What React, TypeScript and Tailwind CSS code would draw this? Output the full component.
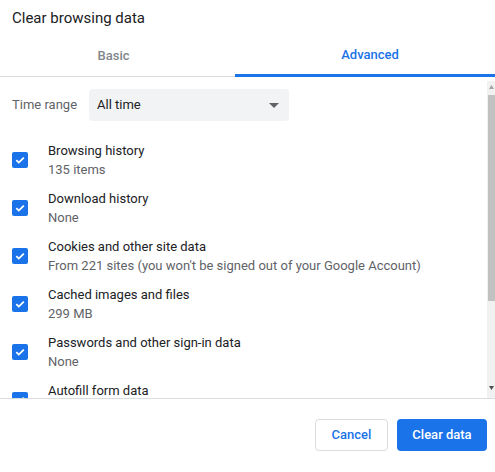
import { useState } from 'react'

const ITEMS = [
  { title: 'Browsing history', sub: '135 items' },
  { title: 'Download history', sub: 'None' },
  { title: 'Cookies and other site data', sub: "From 221 sites (you won't be signed out of your Google Account)" },
  { title: 'Cached images and files', sub: '299 MB' },
  { title: 'Passwords and other sign-in data', sub: 'None' },
  { title: 'Autofill form data', sub: 'None' },
]

function CheckBox() {
  return (
    <span className="flex h-4 w-4 shrink-0 items-center justify-center rounded-[2px] bg-[#1a73e8]">
      <svg width="12" height="12" viewBox="0 0 12 12" fill="none">
        <path d="M2.3 6.2 4.8 8.6 9.8 3.6" stroke="white" strokeWidth="1.8" />
      </svg>
    </span>
  )
}

export default function App() {
  const [tab, setTab] = useState('advanced')

  return (
    <div className="flex h-[472px] w-[495px] flex-col bg-white font-['Roboto',sans-serif] text-[13px] text-[#202124]">
      {/* Title */}
      <div className="flex h-[37px] items-center px-3 text-[15px]">Clear browsing data</div>

      {/* Tabs */}
      <div className="flex h-10 border-b border-[#dadce0]">
        <button
          type="button"
          className={`flex w-[235px] items-center justify-center pb-[2px] pr-2 font-medium ${tab === 'basic' ? '-mb-px border-b-[3px] border-[#1a73e8] text-[#1a73e8]' : 'text-[#80868b]'}`}
          onClick={() => setTab('basic')}
        >
          Basic
        </button>
        <button
          type="button"
          className={`flex flex-1 items-center justify-center pb-[2px] pl-[10px] font-medium ${tab === 'advanced' ? '-mb-px border-b-[3px] border-[#1a73e8] text-[#1a73e8]' : 'text-[#80868b]'}`}
          onClick={() => setTab('advanced')}
        >
          Advanced
        </button>
      </div>

      {/* Scrollable body */}
      <div className="flex h-[322px] border-b border-[#dadce0]">
        <div className="flex-1 overflow-hidden pt-3">
          <div className="flex items-center px-3">
            <span className="w-[77px] text-[#5f6368]">Time range</span>
            <div className="flex h-8 w-[200px] items-center justify-between rounded-[4px] bg-[#f1f3f4] pl-[8px] pr-[10px]">
              <span>All time</span>
              <svg width="10" height="5" viewBox="0 0 10 5">
                <path d="M0 0h10L5 5z" fill="#5f6368" />
              </svg>
            </div>
          </div>

          <div className="mt-[15px]">
            {ITEMS.map((item) => (
              <div key={item.title} className="flex h-12 items-center gap-5 px-3">
                <CheckBox />
                <div className="flex flex-col leading-[19px]">
                  <span>{item.title}</span>
                  <span className="text-[#5f6368]">{item.sub}</span>
                </div>
              </div>
            ))}
          </div>
        </div>

        {/* Scrollbar */}
        <div className="mt-1 flex w-2 flex-col items-center bg-[#f1f1f1]">
          <svg width="5" height="4" viewBox="0 0 5 4" className="mt-1">
            <path d="M0 4h5L2.5 0z" fill="#a3a3a3" />
          </svg>
          <div className="mt-[6px] h-[206px] w-[7px] bg-[#c1c1c1]" />
          <div className="flex-1" />
          <svg width="5" height="4" viewBox="0 0 5 4" className="mb-2">
            <path d="M0 0h5L2.5 4z" fill="#505050" />
          </svg>
        </div>
      </div>

      {/* Footer */}
      <div className="flex flex-1 items-center justify-end gap-[9px] pb-[2px] pr-2">
        <button
          type="button"
          className="h-8 w-[73px] rounded-[4px] border border-[#dadce0] font-medium text-[#1a73e8]"
        >
          Cancel
        </button>
        <button
          type="button"
          className="h-8 w-[90px] rounded-[4px] bg-[#1a73e8] font-medium text-white"
        >
          Clear data
        </button>
      </div>
    </div>
  )
}
